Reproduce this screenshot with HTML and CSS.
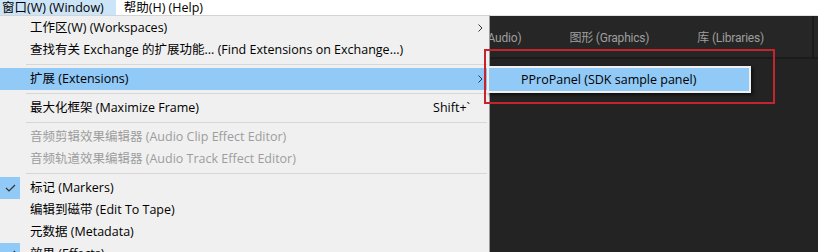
FILE: index.html
```html
<!DOCTYPE html>
<html>
<head>
    <title>Window Menu</title>
    <link rel="stylesheet" href="styles.css">
</head>
<body>
    <div class="menubar">
        <div class="menubar-item active">窗口(W) (Window)</div>
        <div class="menubar-item">帮助(H) (Help)</div>
    </div>

    <div class="workspace">
        <div class="tabbar">
            <div class="tabs">
                <span class="tab">音频 (Audio)</span>
                <span class="tab">图形 (Graphics)</span>
                <span class="tab">库 (Libraries)</span>
            </div>
            <div class="tab-rest"></div>
        </div>
        <div class="panel"></div>
    </div>

    <!-- dropdown of the Window menu -->
    <div class="menu">
        <div class="item">
            <span class="check"></span>
            <span class="label">工作区(W) (Workspaces)</span>
            <span class="arrow"><svg width="5" height="8" viewBox="0 0 5 8"><polyline points="0.5,0.5 4,4 0.5,7.5" fill="none" stroke="#333" stroke-width="1"/></svg></span>
        </div>
        <div class="item">
            <span class="check"></span>
            <span class="label">查找有关 Exchange 的扩展功能... (Find Extensions on Exchange...)</span>
            <span class="arrow"></span>
        </div>
        <div class="sep"></div>
        <div class="item hover">
            <span class="check"></span>
            <span class="label">扩展 (Extensions)</span>
            <span class="arrow"><svg width="5" height="8" viewBox="0 0 5 8"><polyline points="0.5,0.5 4,4 0.5,7.5" fill="none" stroke="#333" stroke-width="1"/></svg></span>
        </div>
        <div class="sep"></div>
        <div class="item">
            <span class="check"></span>
            <span class="label">最大化框架 (Maximize Frame)</span>
            <span class="shortcut">Shift+`</span>
            <span class="arrow"></span>
        </div>
        <div class="sep"></div>
        <div class="item disabled">
            <span class="check"></span>
            <span class="label">音频剪辑效果编辑器 (Audio Clip Effect Editor)</span>
            <span class="arrow"></span>
        </div>
        <div class="item disabled">
            <span class="check"></span>
            <span class="label">音频轨道效果编辑器 (Audio Track Effect Editor)</span>
            <span class="arrow"></span>
        </div>
        <div class="sep"></div>
        <div class="item">
            <span class="check on"><svg width="11" height="8" viewBox="0 0 11 8"><polyline points="1,4 4,7 10,1" fill="none" stroke="#333" stroke-width="1.2"/></svg></span>
            <span class="label">标记 (Markers)</span>
            <span class="arrow"></span>
        </div>
        <div class="item">
            <span class="check"></span>
            <span class="label">编辑到磁带 (Edit To Tape)</span>
            <span class="arrow"></span>
        </div>
        <div class="item">
            <span class="check"></span>
            <span class="label">元数据 (Metadata)</span>
            <span class="arrow"></span>
        </div>
        <div class="item">
            <span class="check on"><svg width="11" height="8" viewBox="0 0 11 8"><polyline points="1,4 4,7 10,1" fill="none" stroke="#333" stroke-width="1.2"/></svg></span>
            <span class="label">效果 (Effects)</span>
            <span class="arrow"></span>
        </div>
    </div>

    <div class="submenu">
        <div class="subitem">PProPanel (SDK sample panel)</div>
    </div>

    <div class="callout"></div>
</body>
</html>
```

FILE: styles.css
```css
body {
    margin: 0;
    width: 818px;
    height: 252px;
    overflow: hidden;
    background: #232323;
    font-family: "Open Sans", "Noto Sans CJK SC", sans-serif;
    font-size: 12.5px;
    color: #000;
}

.menubar {
    display: flex;
    height: 15px;
    background: #fff;
    border-bottom: 1px solid #e3e3e3;
}

.menubar-item {
    line-height: 15px;
    padding: 0 12px 0 2px;
    margin-right: 6px;
}

.menubar-item.active {
    background: #cce4f7;
}

.workspace {
    display: flex;
    flex-direction: column;
    height: 236px;
}

.tabbar {
    display: flex;
    height: 41px;
    background: #262626;
    border-bottom: 2px solid #1b1b1b;
}

.tabs {
    flex: 1;
    display: flex;
    justify-content: flex-end;
    align-items: center;
    gap: 48px;
    padding-right: 48px;
    border-right: 2px solid #1b1b1b;
    color: #9e9e9e;
    font-family: Roboto, "Noto Sans CJK SC", sans-serif;
    font-size: 12px;
    letter-spacing: -0.2px;
}

.tab-rest {
    width: 4px;
}

.panel {
    flex: 1;
    background: #232323;
}

/* dropdown */
.menu {
    position: absolute;
    left: 0;
    top: 15px;
    width: 489px;
    height: 236px;
    overflow: hidden;
    background: #f0f0f0;
    border-top: 1px solid #d4d4d4;
    border-right: 1px solid #9a9a9a;
    padding-top: 1px;
}

.item {
    display: flex;
    align-items: center;
    height: 22px;
    line-height: 22px;
}

.item.hover {
    background: #91c9f7;
}

.item.disabled {
    color: #9d9d9d;
}

.check {
    width: 20px;
    height: 22px;
    margin-right: 10px;
    display: flex;
    align-items: center;
    justify-content: center;
}

.check.on {
    background: #91c9f7;
}

.label {
    flex: 1;
    white-space: nowrap;
}

.shortcut {
    padding-right: 1px;
}

.arrow {
    width: 18px;
    display: flex;
    align-items: center;
    justify-content: center;
}

.sep {
    height: 1px;
    background: #d7d7d7;
    margin: 3px 2px 3px 26px;
}

.submenu {
    position: absolute;
    left: 487px;
    top: 66px;
    width: 260px;
    height: 23px;
    background: #91c9f7;
    border: 2px solid #f0f0f0;
    box-shadow: 2px 2px 3px rgba(0, 0, 0, 0.6);
}

.subitem {
    line-height: 23px;
    padding-left: 32px;
}

.callout {
    position: absolute;
    left: 484px;
    top: 49px;
    width: 291px;
    height: 55px;
    box-sizing: border-box;
    border: 2px solid #c4242b;
}
```
